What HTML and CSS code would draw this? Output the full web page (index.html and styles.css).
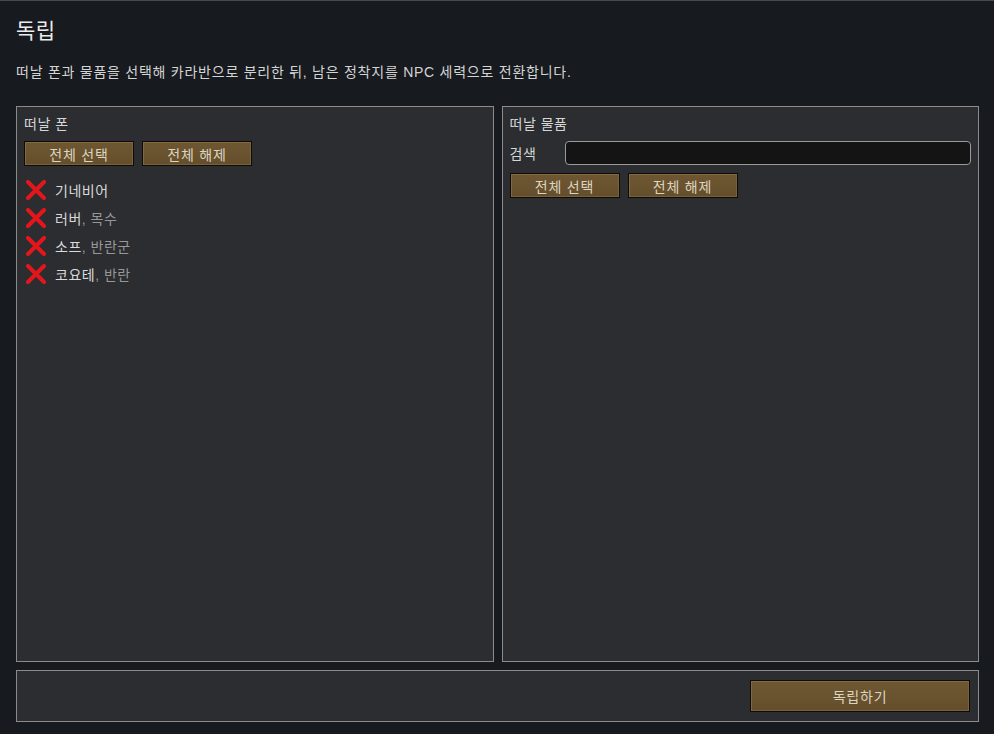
FILE: index.html
```html
<!DOCTYPE html>
<html lang="ko">
<head>
<meta charset="utf-8">
<link rel="stylesheet" href="styles.css">
</head>
<body>
<div class="page">
  <h1 class="title">독립</h1>
  <p class="desc">떠날 폰과 물품을 선택해 카라반으로 분리한 뒤, 남은 정착지를 NPC 세력으로 전환합니다.</p>
  <div class="columns">
    <section class="panel">
      <div class="panel-title">떠날 폰</div>
      <div class="btn-row">
        <button class="btn small">전체 선택</button>
        <button class="btn small">전체 해제</button>
      </div>
      <ul class="pawns">
        <li class="pawn"><svg class="xicon" viewBox="0 0 22 20"><path d="M3 2 L19 18 M19 2 L3 18" /></svg><span class="name">기네비어</span></li>
        <li class="pawn"><svg class="xicon" viewBox="0 0 22 20"><path d="M3 2 L19 18 M19 2 L3 18" /></svg><span class="name">러버</span><span class="role">, 목수</span></li>
        <li class="pawn"><svg class="xicon" viewBox="0 0 22 20"><path d="M3 2 L19 18 M19 2 L3 18" /></svg><span class="name">소프</span><span class="role">, 반란군</span></li>
        <li class="pawn"><svg class="xicon" viewBox="0 0 22 20"><path d="M3 2 L19 18 M19 2 L3 18" /></svg><span class="name">코요테</span><span class="role">, 반란</span></li>
      </ul>
    </section>
    <section class="panel">
      <div class="panel-title">떠날 물품</div>
      <div class="search-row">
        <label class="search-label">검색</label>
        <input class="search-input" type="text">
      </div>
      <div class="btn-row tight">
        <button class="btn small">전체 선택</button>
        <button class="btn small">전체 해제</button>
      </div>
    </section>
  </div>
  <div class="footer">
    <button class="btn big">독립하기</button>
  </div>
</div>
</body>
</html>
```

FILE: styles.css
```css
* { box-sizing: border-box; }
html, body { margin: 0; padding: 0; }
body {
  background: #171a1e;
  border-top: 1px solid #464a50;
  width: 994px;
  height: 734px;
  overflow: hidden;
  font-family: "Liberation Sans", "Noto Sans CJK KR", sans-serif;
  color: #dcdcdc;
}
.page {
  padding: 0 15px 0 16px;
}
.title {
  margin: 0;
  padding-top: 17px;
  font-size: 21px;
  font-weight: normal;
  line-height: 26px;
  color: #ececec;
  letter-spacing: 0.5px;
}
.desc {
  margin: 0;
  padding-top: 19px;
  font-size: 14px;
  line-height: 18px;
  letter-spacing: 0.75px;
  color: #d4d4d4;
}
.columns {
  margin-top: 25px;
  display: flex;
  gap: 8px;
  height: 556px;
}
.panel {
  flex: 1;
  background: #2b2d30;
  border: 1px solid #8b8b8b;
  padding: 8px 7px;
}
.panel-title {
  font-size: 14px;
  line-height: 18px;
  letter-spacing: 0.5px;
  color: #d6d6d6;
}
.btn-row {
  display: flex;
  gap: 8px;
  margin-top: 8px;
}
.btn-row.tight { margin-top: 8px; }
.btn {
  font-family: "Liberation Sans", "Noto Sans CJK KR", sans-serif;
  color: #ddd5c0;
  letter-spacing: 0.8px;
  background: linear-gradient(#6d5631, #6a532f 50%, #644d2b);
  border: 1px solid #0d0c0a;
  box-shadow: inset 1px 1px 0 #836940, inset -1px -1px 0 #7a6238;
  padding: 0;
  cursor: pointer;
}
.btn.small {
  width: 110px;
  height: 25px;
  font-size: 14px;
}
.btn.big {
  width: 220px;
  height: 32px;
  font-size: 14px;
}
.pawns {
  list-style: none;
  margin: 10px 0 0;
  padding: 0;
}
.pawn {
  display: flex;
  align-items: center;
  height: 28px;
  font-size: 14px;
  letter-spacing: 0.5px;
}
.xicon {
  width: 22px;
  height: 20px;
  margin-right: 8px;
  margin-left: 1px;
}
.xicon path {
  stroke: #e3161b;
  stroke-width: 4;
  stroke-linecap: round;
  fill: none;
}
.name { color: #dadada; }
.role { color: #979797; }
.search-row {
  display: flex;
  align-items: center;
  margin-top: 8px;
}
.search-label {
  width: 55px;
  font-size: 14px;
  letter-spacing: 0.5px;
  color: #d6d6d6;
}
.search-input {
  flex: 1;
  height: 24px;
  background: #141414;
  border: 1px solid #9a9a9a;
  border-radius: 4px;
  outline: none;
}
.footer {
  margin-top: 8px;
  height: 52px;
  background: #2b2d30;
  border: 1px solid #8b8b8b;
  display: flex;
  justify-content: flex-end;
  align-items: center;
  padding-right: 8px;
}
```
